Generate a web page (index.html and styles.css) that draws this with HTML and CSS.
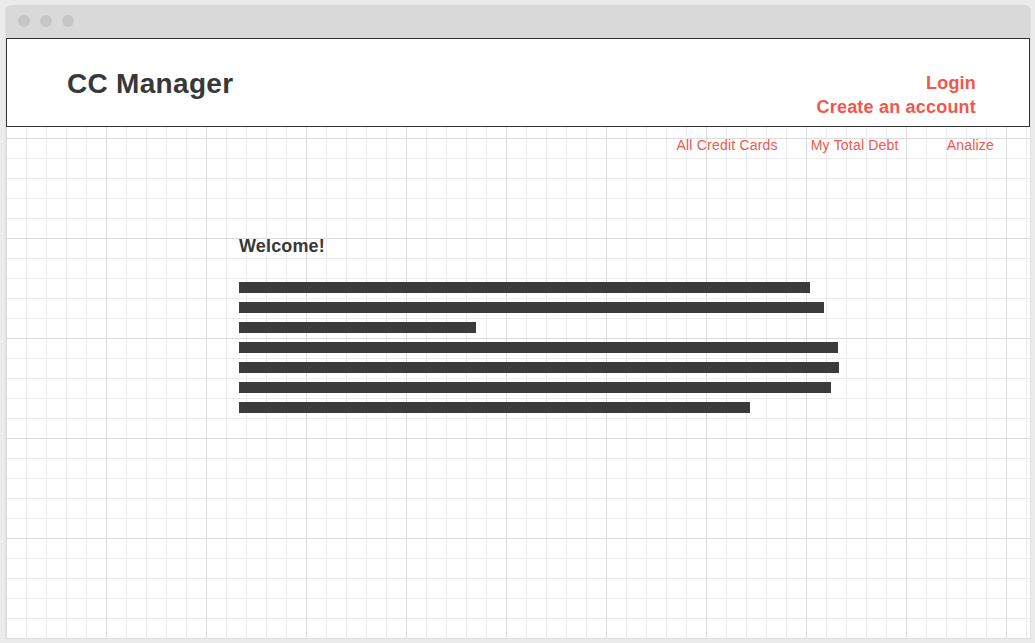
FILE: index.html
```html
<!DOCTYPE html>
<html lang="en">
<head>
<meta charset="utf-8">
<title>CC Manager</title>
<link rel="stylesheet" href="styles.css">
</head>
<body>
<div class="window">
  <div class="titlebar">
    <span class="dot"></span>
    <span class="dot"></span>
    <span class="dot"></span>
  </div>
  <div class="content">
    <header class="header">
      <h1 class="brand">CC Manager</h1>
      <div class="account">
        <a class="account-link" href="#">Login</a>
        <a class="account-link" href="#">Create an account</a>
      </div>
    </header>
    <nav class="nav">
      <a class="nav-link" href="#">All Credit Cards</a>
      <a class="nav-link nav-link--second" href="#">My Total Debt</a>
      <a class="nav-link nav-link--third" href="#">Analize</a>
    </nav>
    <main class="main">
      <h2 class="welcome">Welcome!</h2>
      <div class="lines">
        <div class="line" style="width:571px"></div>
        <div class="line" style="width:585px"></div>
        <div class="line" style="width:237px"></div>
        <div class="line" style="width:599px"></div>
        <div class="line" style="width:600px"></div>
        <div class="line" style="width:592px"></div>
        <div class="line" style="width:511px"></div>
      </div>
    </main>
  </div>
</div>
</body>
</html>
```

FILE: styles.css
```css
* {
  box-sizing: border-box;
}

html, body {
  margin: 0;
  padding: 0;
}

body {
  background: #ebebeb;
  font-family: "Liberation Sans", Arial, sans-serif;
  padding: 5px 0 0 5px;
  height: 643px;
  overflow: hidden;
}

.window {
  width: 1026px;
  height: 634px;
  background: #d9d9d9;
  border-radius: 6px 6px 0 0;
  display: flex;
  flex-direction: column;
  overflow: hidden;
  border-left: 1px solid #e0e0e0;
  border-right: 1px solid #e0e0e0;
  border-bottom: 1px solid #dedede;
}

.titlebar {
  height: 33px;
  flex: none;
  display: flex;
  align-items: center;
  gap: 10px;
  padding-left: 12px;
  padding-bottom: 1px;
}

.dot {
  width: 12px;
  height: 12px;
  border-radius: 50%;
  background: #c6c6c6;
}

.content {
  flex: 1;
  background-color: #ffffff;
  background-image:
    linear-gradient(to right, #dcdcdc 1px, transparent 1px),
    linear-gradient(to bottom, #dcdcdc 1px, transparent 1px),
    linear-gradient(to right, #ebebeb 1px, transparent 1px),
    linear-gradient(to bottom, #ebebeb 1px, transparent 1px);
  background-size: 100px 100px, 100px 100px, 20px 20px, 20px 20px;
  background-position: 0 0;
}

.header {
  height: 89px;
  border: 1px solid #333333;
  background: #ffffff;
  display: flex;
  justify-content: space-between;
  align-items: flex-start;
  padding: 29px 53px 0 60px;
}

.brand {
  margin: 0;
  font-size: 28px;
  font-weight: 700;
  color: #383838;
  line-height: normal;
  letter-spacing: 0.3px;
}

.account {
  display: flex;
  flex-direction: column;
  align-items: flex-end;
  margin-top: 3px;
}

.account-link {
  font-size: 18px;
  font-weight: 700;
  line-height: 24px;
  color: #f5554a;
  text-decoration: none;
  letter-spacing: 0.2px;
}

.nav {
  display: flex;
  justify-content: flex-end;
  padding: 8px 36px 0 0;
  line-height: 20px;
}

.nav-link {
  font-size: 14px;
  color: #f5554a;
  text-decoration: none;
  letter-spacing: 0.2px;
}

.nav-link--second {
  margin-left: 33px;
}

.nav-link--third {
  margin-left: 48px;
}

.main {
  padding: 79px 0 0 233px;
}

.welcome {
  margin: 0;
  font-size: 18px;
  font-weight: 700;
  line-height: 24px;
  color: #383838;
  letter-spacing: 0.15px;
}

.lines {
  margin-top: 24px;
  display: flex;
  flex-direction: column;
  gap: 9px;
}

.line {
  height: 11px;
  background: #3b3b3b;
}
```
